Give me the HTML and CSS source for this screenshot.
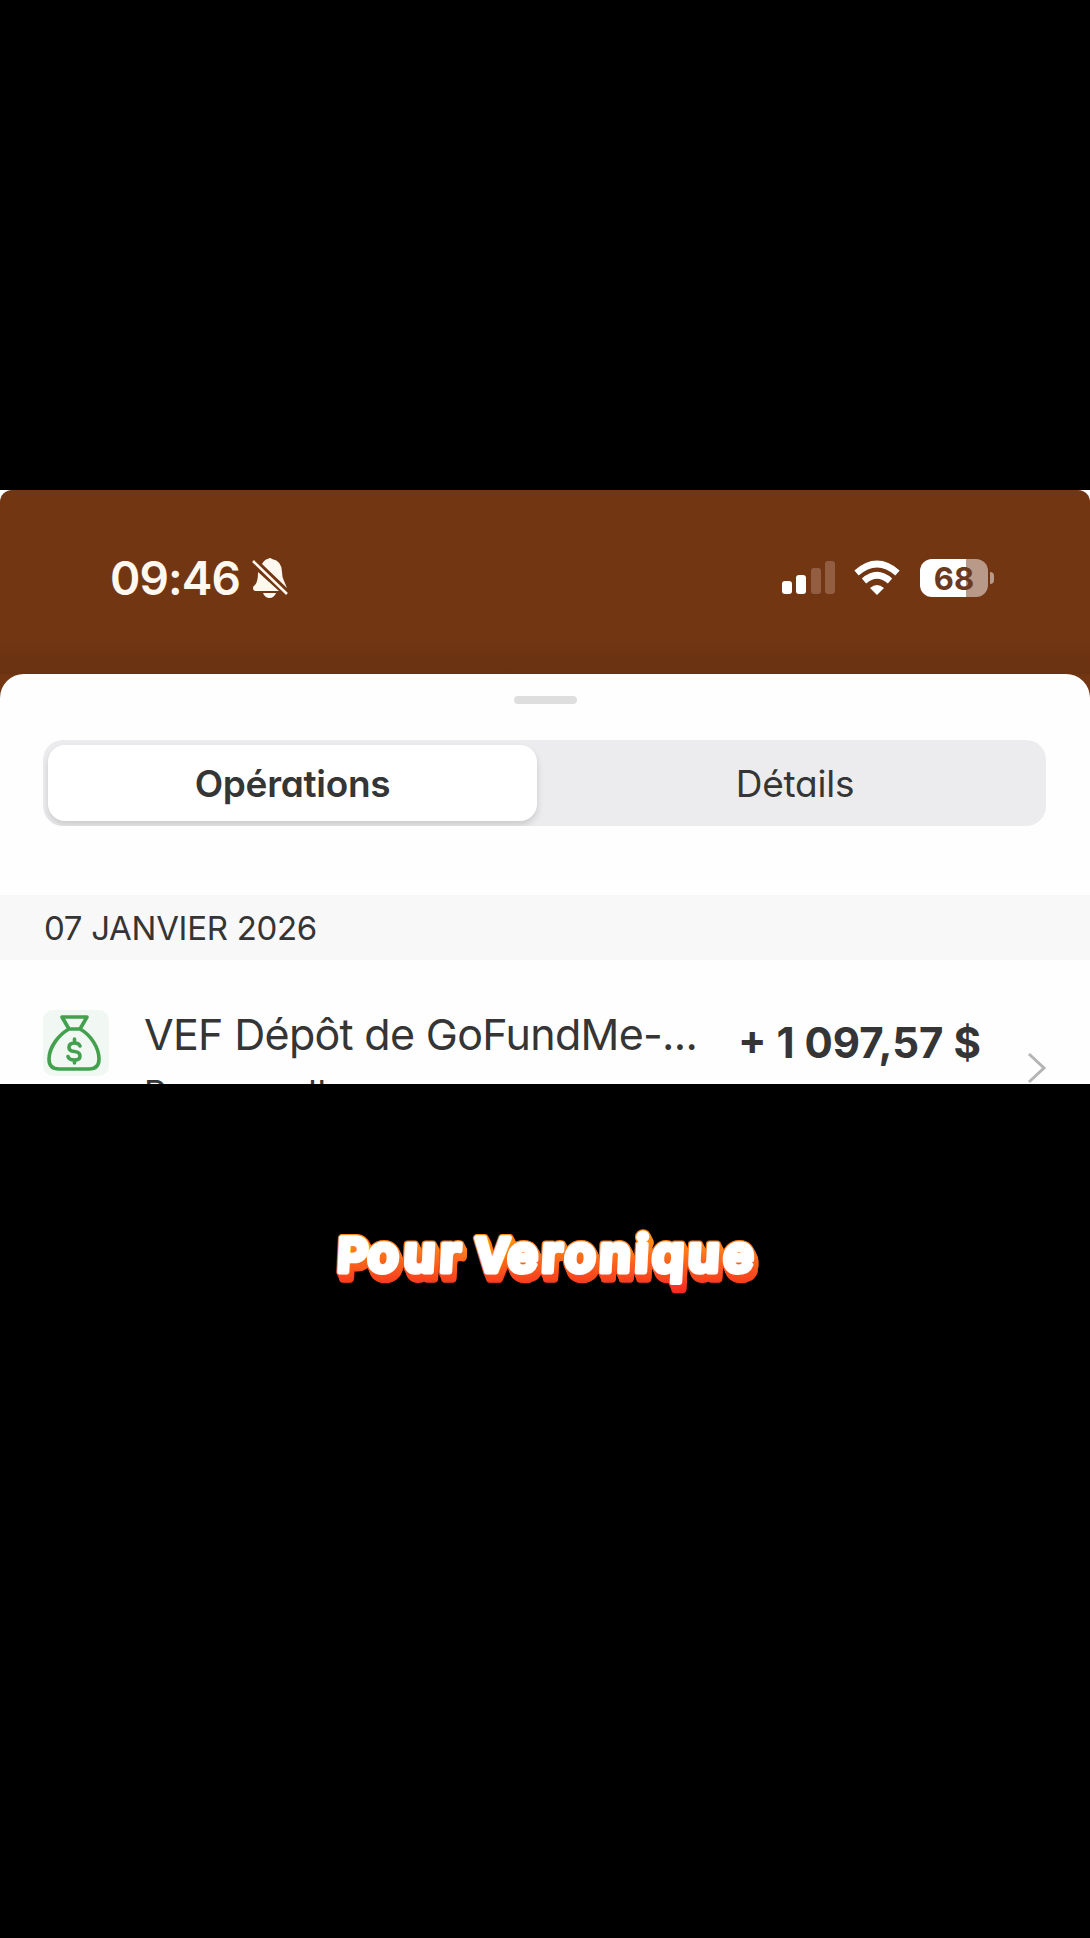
FILE: index.html
```html
<!DOCTYPE html>
<html lang="fr">
<head>
<meta charset="utf-8">
<title>Opérations</title>
<link rel="stylesheet" href="styles.css">
</head>
<body>
<main class="capture">
  <div class="screen">
    <header class="status">
      <div class="status-left">
        <span class="time">09:46</span>
        <svg class="bell" width="38" height="42" viewBox="0 0 38 42" fill="#fff8ef">
          <path d="M7 15 28 34H5Q2 34 2 31Q2 29 4 28Q7 25 7 15ZM11 7Q14 2 17 2Q19 0 21 2Q31 4 31 15Q31 20 33 24L36 31Z"/>
          <path d="M12 36H25Q23 41 18.500 41Q14 41 12 36Z"/>
          <path d="M3 4 35 36" stroke="#723613" stroke-width="6"/>
          <path d="M2 4 36 37" stroke="#fff8ef" stroke-width="2.600"/>
        </svg>
      </div>
      <div class="status-right">
        <svg class="signal" width="54" height="36" viewBox="0 0 54 36">
          <rect x="1" y="21" width="10" height="13" rx="3" fill="#fff"/>
          <rect x="15" y="15" width="10" height="19" rx="3" fill="#fff"/>
          <rect x="30" y="8" width="10" height="26" rx="3" fill="#935d42"/>
          <rect x="44" y="1" width="10" height="33" rx="3" fill="#935d42"/>
        </svg>
        <svg class="wifi" width="46" height="36" viewBox="0 0 46 36" fill="none" stroke="#fff" stroke-width="6.500">
          <path d="M2.500 13Q23-5 43.500 13"/>
          <path d="M10 21Q23 9.500 36 21"/>
          <path d="M23 35 16 28Q23 22 30 28Z" fill="#fff" stroke="none"/>
        </svg>
        <div class="battery"><span class="level">68</span><i class="cap"></i></div>
      </div>
    </header>
    <section class="sheet">
      <div class="handle"></div>
      <nav class="tabs">
        <span class="tab active">Opérations</span>
        <span class="tab other">Détails</span>
      </nav>
      <h2 class="date">07 JANVIER 2026</h2>
      <div class="row">
        <div class="bag">
          <svg width="66" height="66" viewBox="0 0 66 66" fill="none" stroke="#43a04d" stroke-width="3.600" stroke-linejoin="round" stroke-linecap="round">
            <path d="M19 7H44L37 19H26ZM26 19H37C48 25 56 38 56 49Q56 59 46 59H16Q6 59 6 49C6 38 15 25 26 19Z"/>
            <path d="M37 36Q36 33 31.500 33Q26 33 26 37.500Q26 41 31.500 41.500Q37 42 37 46Q37 50 31.500 50Q26 50 25 46.500M31.500 29V33M31.500 50V53"/>
          </svg>
        </div>
        <div class="labels">
          <div class="name">VEF Dépôt de GoFundMe-...</div>
          <div class="sub">Personnelle</div>
        </div>
        <div class="amount">+ 1 097,57 $</div>
        <svg class="chevron" width="20" height="32" viewBox="0 0 20 32" fill="none" stroke="#b4b4b4" stroke-width="3"><path d="M2 2 17 16 2 30"/></svg>
      </div>
    </section>
  </div>
  <svg class="caption" width="450" height="100" viewBox="0 0 450 100">
    <defs>
      <linearGradient id="flame" gradientUnits="userSpaceOnUse" x1="0" y1="25" x2="0" y2="75">
        <stop offset="0" stop-color="#ff8a18"/><stop offset="1" stop-color="#f72a20"/>
      </linearGradient>
      <text id="words" y="62" transform="skewX(-3)"><tspan class="big" x="20">P</tspan><tspan x="50" textLength="93">our</tspan><tspan class="big" x="157">V</tspan><tspan x="190" textLength="246">eronique</tspan></text>
    </defs>
    <g class="depth"><use href="#words"/><use href="#words" x="1" y="2"/><use href="#words" x="2" y="4"/><use href="#words" x="3" y="6"/><use href="#words" x="3" y="7"/></g>
    <use class="face" href="#words"/>
  </svg>
</main>
</body>
</html>
```
FILE: styles.css
```css
* { box-sizing: border-box; }
body { margin: 0; background: #000; font-family: Inter, "Liberation Sans", sans-serif; font-feature-settings: "cv11"; color: #353535; }
.capture { width: 1090px; height: 1938px; padding-top: 490px; overflow: hidden; background: #000; }
.screen { height: 594px; overflow: hidden; background: linear-gradient(#fff 30px, #723613 30px); }
.status { height: 184px; padding: 67px 96px 0 110px; display: flex; justify-content: space-between; border-radius: 12px 12px 0 0; background: linear-gradient(#723613 80%, #693211); }
.status-left, .status-right { display: flex; height: 42px; align-items: center; }
.time { font-size: 46px; line-height: 44px; font-weight: 600; color: #fff8ef; width: 141px; letter-spacing: -.9px; white-space: nowrap; }
.signal { margin-right: 19px; }
.wifi { margin-right: 20px; }
.battery { position: relative; width: 68px; height: 38px; margin-right: 6px; border-radius: 12px; background: linear-gradient(90deg, #fff 46px, #b99a89 46px); text-align: center; }
.level { font-size: 31px; line-height: 39px; font-weight: 700; color: #6b3920; }
.cap { position: absolute; right: -6px; top: 13px; width: 4px; height: 12px; border-radius: 0 5px 5px 0; background: #b99a89; }
.sheet { height: 420px; border-radius: 24px 24px 0 0; background: #fefefe; padding-top: 22px; }
.handle { width: 63px; height: 8px; margin: 0 auto 36px; border-radius: 4px; background: #dedede; }
.tabs { display: flex; width: 1003px; height: 86px; margin-left: 43px; padding: 5px; border-radius: 20px; background: #ececee; overflow: hidden; }
.tab { flex: 1; display: flex; align-items: center; justify-content: center; font-size: 37px; }
.tab.active { flex: 0 0 489px; border-radius: 17px; background: #fff; box-shadow: 0 4px 7px rgba(0, 0, 0, .14); font-weight: 600; letter-spacing: -.3px; }
.tab.other { padding-left: 12px; letter-spacing: -.2px; }
.date { margin: 69px 0 0; height: 65px; padding-left: 44px; background: #f8f8f8; font-size: 33px; line-height: 67px; font-weight: 400; letter-spacing: -.3px; }
.row { display: flex; padding-left: 43px; }
.bag { width: 66px; height: 66px; margin-top: 50px; border-radius: 10px; background: #f1f7f2; }
.labels { width: 560px; margin: 48px 0 0 35px; white-space: nowrap; }
.name { font-size: 43px; line-height: 52px; letter-spacing: -.7px; }
.sub { font-size: 35px; line-height: 42px; margin-top: 12px; letter-spacing: .9px; }
.amount { width: 250px; margin: 57px 0 0 34px; font-size: 42px; line-height: 52px; font-weight: 700; white-space: nowrap; }
.chevron { margin: 92px 0 0 39px; flex: none; }
.caption { display: block; margin: 126px 0 0 320px; }
#words { font-size: 51px; font-weight: 700; stroke-linejoin: round; }
.big { font-size: 47px; }
.depth { fill: url(#flame); stroke: url(#flame); stroke-width: 7.5px; }
.face { fill: #fff; stroke: #fff; stroke-width: 5px; }
```
